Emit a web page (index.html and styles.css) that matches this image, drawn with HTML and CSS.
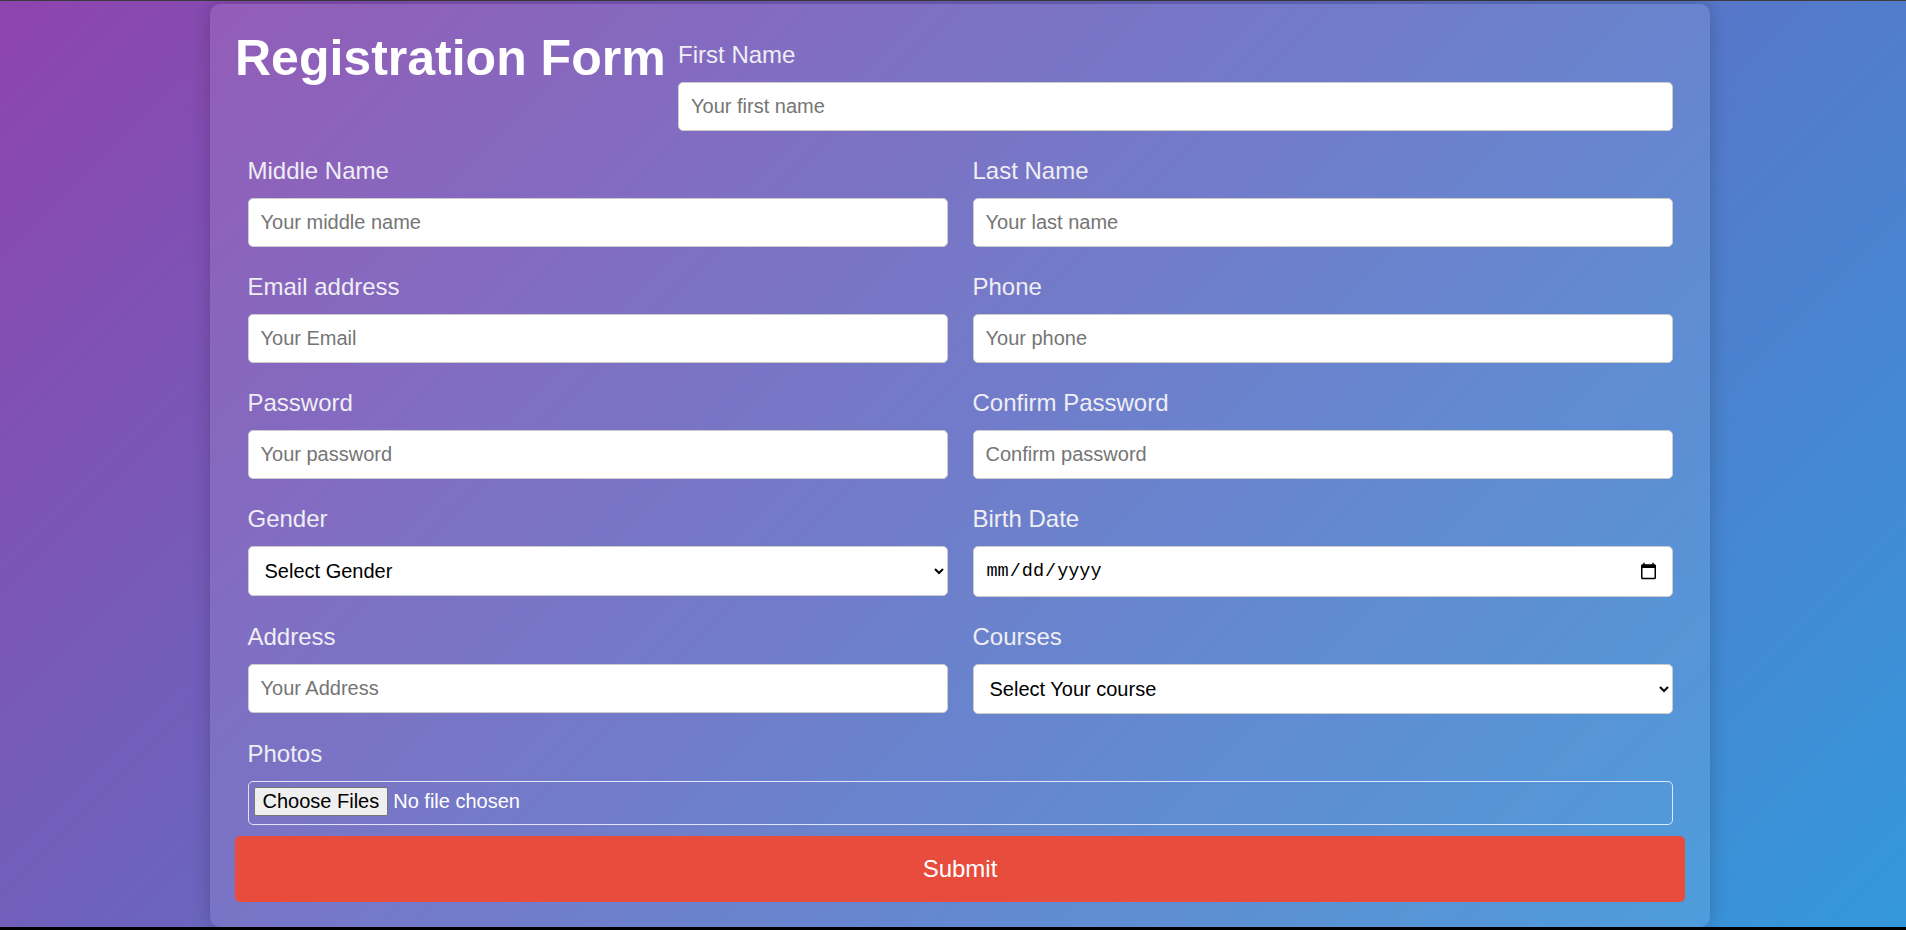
FILE: index.html
```html
<!DOCTYPE html>
<html lang="en">
<head>
<meta charset="utf-8">
<title>Registration Form</title>
<link rel="stylesheet" href="styles.css">
</head>
<body>
<div class="page">
  <form class="card">
    <div class="head">
      <h1 class="title">Registration Form</h1>
      <div class="group">
        <label class="label">First Name</label>
        <input class="field" type="text" placeholder="Your first name">
      </div>
    </div>
    <div class="grid">
      <div class="group">
        <label class="label">Middle Name</label>
        <input class="field" type="text" placeholder="Your middle name">
      </div>
      <div class="group">
        <label class="label">Last Name</label>
        <input class="field" type="text" placeholder="Your last name">
      </div>
      <div class="group">
        <label class="label">Email address</label>
        <input class="field" type="email" placeholder="Your Email">
      </div>
      <div class="group">
        <label class="label">Phone</label>
        <input class="field" type="tel" placeholder="Your phone">
      </div>
      <div class="group">
        <label class="label">Password</label>
        <input class="field" type="password" placeholder="Your password">
      </div>
      <div class="group">
        <label class="label">Confirm Password</label>
        <input class="field" type="password" placeholder="Confirm password">
      </div>
      <div class="group">
        <label class="label">Gender</label>
        <select class="field select">
          <option>Select Gender</option>
          <option>Male</option>
          <option>Female</option>
        </select>
      </div>
      <div class="group">
        <label class="label">Birth Date</label>
        <input class="field date" type="date">
      </div>
      <div class="group">
        <label class="label">Address</label>
        <input class="field" type="text" placeholder="Your Address">
      </div>
      <div class="group">
        <label class="label">Courses</label>
        <select class="field select">
          <option>Select Your course</option>
          <option>Computer Science</option>
        </select>
      </div>
    </div>
    <div class="group group-last">
      <label class="label">Photos</label>
      <input class="file" type="file" multiple>
    </div>
    <button class="submit" type="submit">Submit</button>
  </form>
</div>
</body>
</html>
```

FILE: styles.css
```css
html {
  background: #000;
}
body {
  margin: 0;
  font-family: "Liberation Sans", Arial, sans-serif;
}
.page {
  box-sizing: border-box;
  height: 927px;
  border-top: 1px solid #3c3c3c;
  padding: 3px 0 0 14px;
  display: flex;
  justify-content: center;
  align-items: flex-start;
  background: linear-gradient(135deg, #8e44ad, #3498db);
}
.card {
  box-sizing: border-box;
  width: 1500px;
  padding: 25px;
  border-radius: 10px;
  background: rgba(255, 255, 255, 0.1);
  box-shadow: 0 0 20px rgba(0, 0, 0, 0.2);
  display: flex;
  flex-direction: column;
}
.head {
  display: flex;
  align-items: flex-start;
}
.title {
  margin: 0;
  flex: none;
  font-size: 50px;
  font-weight: bold;
  color: #fff;
  line-height: normal;
}
.head .group {
  flex: 1;
}
.grid {
  display: grid;
  grid-template-columns: 1fr 1fr;
}
.group {
  padding: 11.5px 12.5px 14.5px;
  display: flex;
  flex-direction: column;
}
.group-last {
  padding-bottom: 11px;
}
.label {
  display: block;
  font-size: 24px;
  color: #eeeef4;
  margin-bottom: 13px;
}
.field {
  box-sizing: border-box;
  width: 100%;
  height: 49px;
  padding: 12px;
  border: 1px solid #ccc;
  border-radius: 5px;
  background: #fff;
  font-family: "Liberation Sans", Arial, sans-serif;
  font-size: 20px;
  color: #000;
}
.field::placeholder {
  color: #757575;
}
.select {
  height: 50px;
  padding: 0 8px 0 12px;
}
.date {
  height: 51px;
  font-family: "Liberation Mono", monospace;
  font-size: 18.5px;
}
.file {
  box-sizing: border-box;
  width: 100%;
  height: 44px;
  padding: 5px;
  border: 1px solid rgba(255, 255, 255, 0.8);
  border-radius: 5px;
  background: transparent;
  color: #fff;
  font-family: "Liberation Sans", Arial, sans-serif;
  font-size: 20px;
}
.file::file-selector-button {
  font-family: "Liberation Sans", Arial, sans-serif;
  font-size: 20px;
  color: #000;
  background: #efefef;
  border: 1px solid #767676;
  border-radius: 2px;
  padding: 2px 8px;
  margin-right: 5px;
}
.submit {
  height: 66px;
  width: 100%;
  border: none;
  border-radius: 5px;
  background: #e74c3c;
  color: #fff;
  font-family: "Liberation Sans", Arial, sans-serif;
  font-size: 24px;
}
```
